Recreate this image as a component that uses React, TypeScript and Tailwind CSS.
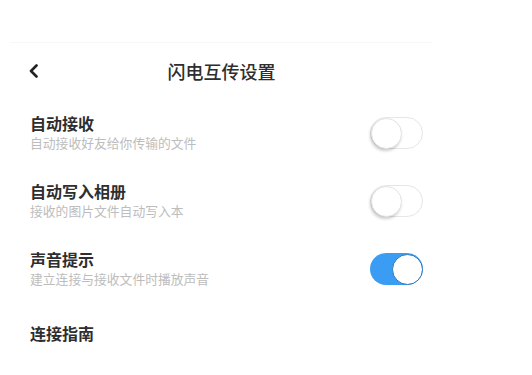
import React, { useState } from 'react'

type Item = {
    title: string
    desc?: string
    toggle?: boolean
}

const items: Item[] = [
    { title: '自动接收', desc: '自动接收好友给你传输的文件', toggle: false },
    { title: '自动写入相册', desc: '接收的图片文件自动写入本', toggle: false },
    { title: '声音提示', desc: '建立连接与接收文件时播放声音', toggle: true },
]

const Toggle = ({ on, onClick }: { on: boolean; onClick: () => void }) => (
    <button
        onClick={onClick}
        className={`relative w-[53px] h-[32px] rounded-full flex items-center ${on ? 'bg-[#3a9df3] justify-end' : 'bg-white border border-[#e6e6e6] justify-start'}`}
    >
        <span
            className={`w-[31px] h-[31px] rounded-full bg-white ${on ? 'border-[1.5px] border-[#2f78b8]' : 'shadow-[-1px_2px_3px_rgba(0,0,0,0.2)] border border-[#e4e4e4]'}`}
        />
    </button>
)

export default function App() {
    const [states, setStates] = useState(items.map((i) => !!i.toggle))

    return (
        <div className="w-[532px] h-[375px] bg-white overflow-hidden" style={{ fontFamily: '"Noto Sans CJK SC", "Noto Sans", sans-serif' }}>
            <div className="w-[443px]">
                <div className="h-[42px]" />
                <div className="mx-[10px] h-px bg-[#f7f7f7]" />

                {/* header */}
                <div className="relative h-[56px] flex items-center justify-center">
                    <svg className="absolute left-[28px] top-[21px]" width="11" height="14" viewBox="0 0 11 14" fill="none">
                        <path d="M8.5 1.5L3 7l5.5 5.5" stroke="#222" strokeWidth="2.6" strokeLinecap="round" strokeLinejoin="round" />
                    </svg>
                    <div className="text-[18px] font-medium text-[#2e2e2e]">闪电互传设置</div>
                </div>

                {items.map((item, i) => (
                    <div key={item.title} className="h-[68px] flex items-center justify-between pl-[30px] pr-[20px]">
                        <div className="flex flex-col -mt-[3px]">
                            <div className="text-[16px] leading-[22px] font-bold text-[#2e2e2e]">{item.title}</div>
                            <div className="text-[12.8px] leading-[17px] text-[#bdbdbd]">{item.desc}</div>
                        </div>
                        <Toggle
                            on={states[i]}
                            onClick={() => setStates((s) => s.map((v, j) => (j === i ? !v : v)))}
                        />
                    </div>
                ))}

                <div className="h-[60px] flex items-center pl-[30px]">
                    <div className="text-[16px] leading-[22px] font-bold text-[#2e2e2e]">连接指南</div>
                </div>
            </div>
        </div>
    )
}
